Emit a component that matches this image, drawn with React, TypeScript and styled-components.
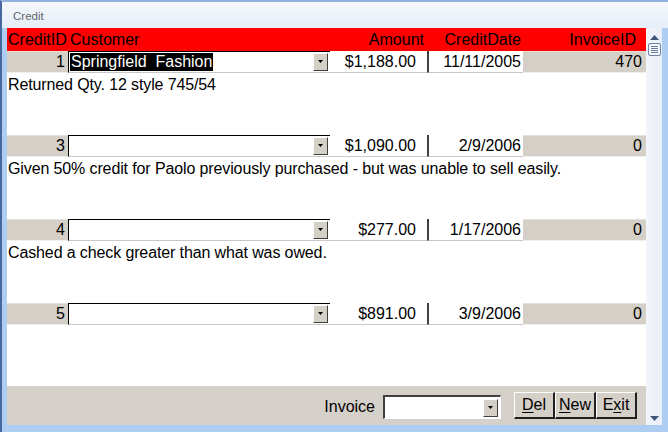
import React from "react";
import styled, { createGlobalStyle, css } from "styled-components";

type Credit = {
  id: number;
  customer: string;
  amount: string;
  date: string;
  invoice: string;
  memo: string;
};

const credits: Credit[] = [
  { id: 1, customer: "Springfield  Fashion", amount: "$1,188.00", date: "11/11/2005", invoice: "470", memo: "Returned Qty. 12 style 745/54" },
  { id: 3, customer: "", amount: "$1,090.00", date: "2/9/2006", invoice: "0", memo: "Given 50% credit for Paolo previously purchased - but was unable to sell easily." },
  { id: 4, customer: "", amount: "$277.00", date: "1/17/2006", invoice: "0", memo: "Cashed a check greater than what was owed." },
  { id: 5, customer: "", amount: "$891.00", date: "3/9/2006", invoice: "0", memo: "" },
];

const GlobalStyle = createGlobalStyle`
  body {
    margin: 0;
    font-family: "Liberation Sans", Arial, sans-serif;
  }
`;

const DropArrow = () => (
  <svg width="7" height="4" viewBox="0 0 7 4">
    <path d="M1 0h5L3.5 3z" fill="#000" />
  </svg>
);

const App = () => {
  return (
    <>
      <GlobalStyle />
      <Frame>
        <TitleBar>Credit</TitleBar>
        <Body>
          <Form>
            <Header>
              <HeadCell $w={61} $align="left" $pad={1}>CreditID</HeadCell>
              <HeadCell $w={262} $align="left" $pad={2}>Customer</HeadCell>
              <HeadCell $w={97} $align="right" $pad={3}>Amount</HeadCell>
              <HeadCell $w={96} $align="right" $pad={2}>CreditDate</HeadCell>
              <HeadCell $w={123} $align="right" $pad={10}>InvoiceID</HeadCell>
            </Header>
            <Detail>
              {credits.map((c) => (
                <Record key={c.id}>
                  <Fields>
                    <GrayCell $w={61} $pad={3}>{c.id}</GrayCell>
                    <Combo $w={262}>
                      <ComboText>
                        {c.customer && <Selected>{c.customer}</Selected>}
                      </ComboText>
                      <DropButton><DropArrow /></DropButton>
                    </Combo>
                    <TextCell $w={97} $pad={11}>{c.amount}</TextCell>
                    <TextCell $w={96} $pad={2} $thick>{c.date}</TextCell>
                    <GrayCell $w={123} $pad={4}>{c.invoice}</GrayCell>
                  </Fields>
                  <Memo>{c.memo}</Memo>
                </Record>
              ))}
            </Detail>
            <Footer>
              <Label>Invoice</Label>
              <FooterCombo>
                <DropButton><DropArrow /></DropButton>
              </FooterCombo>
              <Buttons>
                <Button><u>D</u>el</Button>
                <Button><u>N</u>ew</Button>
                <Button>E<u>x</u>it</Button>
              </Buttons>
            </Footer>
          </Form>
          <ScrollBar>
            <svg width="9" height="5" viewBox="0 0 9 5">
              <path d="M0 5L4.5 0L9 5z" fill="#3f5578" />
            </svg>
            <Thumb>
              <Grip />
              <Grip />
              <Grip />
              <Grip />
            </Thumb>
            <Track />
            <svg width="9" height="5" viewBox="0 0 9 5">
              <path d="M0 0h9L4.5 5z" fill="#3f5578" />
            </svg>
          </ScrollBar>
        </Body>
      </Frame>
    </>
  );
};

const Frame = styled.div`
  width: 668px;
  height: 432px;
  box-sizing: border-box;
  display: flex;
  flex-direction: column;
  background: #aecdf2;
  border-left: 2px solid #46689f;
  border-top: 2px solid #8fb1dc;
  overflow: hidden;
`;

const TitleBar = styled.div`
  height: 26px;
  display: flex;
  align-items: center;
  padding-left: 11px;
  padding-top: 2px;
  box-sizing: border-box;
  background: linear-gradient(#f4f7fc, #e6eef9);
  color: #666;
  font-size: 11.5px;
`;

const Body = styled.div`
  flex: 1;
  display: flex;
  padding: 0 6px 7px 5px;
  min-height: 0;
`;

const Form = styled.div`
  width: 639px;
  display: flex;
  flex-direction: column;
`;

const Header = styled.div`
  height: 23px;
  display: flex;
  align-items: center;
  background: #ff0000;
`;

const HeadCell = styled.div<{ $w: number; $align: "left" | "right"; $pad: number }>`
  width: ${(p) => p.$w}px;
  box-sizing: border-box;
  text-align: ${(p) => p.$align};
  ${(p) => (p.$align === "left" ? `padding-left: ${p.$pad}px;` : `padding-right: ${p.$pad}px;`)}
  font-size: 16px;
  color: #000;
  white-space: nowrap;
`;

const Detail = styled.div`
  height: 335px;
  background: #fff;
  overflow: hidden;
`;

const Record = styled.div`
  height: 84px;
  display: flex;
  flex-direction: column;
`;

const Fields = styled.div`
  height: 22px;
  display: flex;
`;

const cellBase = css<{ $w: number; $pad?: number }>`
  width: ${(p) => p.$w}px;
  box-sizing: border-box;
  display: flex;
  align-items: center;
  justify-content: flex-end;
  padding-right: ${(p) => p.$pad ?? 0}px;
  font-size: 16px;
  color: #000;
  white-space: nowrap;
`;

const GrayCell = styled.div<{ $w: number; $pad?: number }>`
  ${cellBase};
  background: #d4d0c8;
  border-top: 1px solid #e4e1dc;
  border-bottom: 1px solid #f0efec;
`;

const TextCell = styled.div<{ $w: number; $pad?: number; $thick?: boolean }>`
  ${cellBase};
  background: #fff;
  border-left: ${(p) => (p.$thick ? "2px solid #404040" : "none")};
  border-bottom: 1px solid #c8c8c8;
`;

const Combo = styled.div<{ $w: number }>`
  width: ${(p) => p.$w}px;
  box-sizing: border-box;
  display: flex;
  align-items: center;
  padding: 1px 2px 1px 1px;
  background: #fff;
  border-left: 1px solid #000;
  border-top: 1px solid #000;
  border-bottom: 1px solid #c8c8c8;
`;

const ComboText = styled.div`
  flex: 1;
  display: flex;
  align-items: center;
  height: 100%;
`;

const Selected = styled.span`
  background: #000;
  color: #fff;
  font-size: 16px;
  line-height: 18px;
  padding: 0 1px 0 1px;
  white-space: pre;
`;

const DropButton = styled.div`
  width: 15px;
  height: 18px;
  box-sizing: border-box;
  display: flex;
  align-items: center;
  justify-content: center;
  background: #d4d0c8;
  border-top: 1px solid #fff;
  border-left: 1px solid #fff;
  border-right: 1px solid #404040;
  border-bottom: 1px solid #404040;
`;

const Memo = styled.div`
  padding: 3px 0 0 1px;
  font-size: 16px;
  letter-spacing: -0.12px;
  color: #000;
  white-space: nowrap;
`;

const Footer = styled.div`
  height: 39px;
  display: flex;
  align-items: center;
  justify-content: flex-end;
  padding-right: 9px;
  background: #d6d0ca;
`;

const Label = styled.span`
  font-size: 16px;
  color: #000;
  margin-right: 8px;
  margin-top: 2px;
`;

const FooterCombo = styled.div`
  width: 118px;
  height: 24px;
  box-sizing: border-box;
  margin-top: 3px;
  display: flex;
  align-items: center;
  justify-content: flex-end;
  padding-right: 2px;
  background: #fff;
  border-top: 2px solid #404040;
  border-left: 2px solid #404040;
  border-right: 1px solid #fff;
  border-bottom: 1px solid #fff;
`;

const Buttons = styled.div`
  display: flex;
  margin-left: 13px;
`;

const Button = styled.div`
  width: 41px;
  height: 27px;
  box-sizing: border-box;
  display: flex;
  align-items: center;
  justify-content: center;
  background: #d4d0c8;
  border-top: 1px solid #fff;
  border-left: 1px solid #fff;
  border-right: 2px solid #202020;
  border-bottom: 2px solid #202020;
  font-size: 16px;
  color: #000;
  & u {
    text-decoration-thickness: 1px;
    text-underline-offset: 2px;
  }
`;

const ScrollBar = styled.div`
  width: 16px;
  display: flex;
  flex-direction: column;
  align-items: center;
  padding: 7px 0 4px 0;
  box-sizing: border-box;
  background: linear-gradient(90deg, #f3f6fb, #e8eef7);
`;

const Thumb = styled.div`
  width: 13px;
  height: 13px;
  box-sizing: border-box;
  margin-top: 3px;
  display: flex;
  flex-direction: column;
  justify-content: center;
  align-items: center;
  gap: 1px;
  background: #f4f7fc;
  border: 1px solid #6d82aa;
  border-radius: 2px;
`;

const Grip = styled.div`
  width: 7px;
  height: 1px;
  background: #6d7c98;
`;

const Track = styled.div`
  flex: 1;
`;

export default App;
